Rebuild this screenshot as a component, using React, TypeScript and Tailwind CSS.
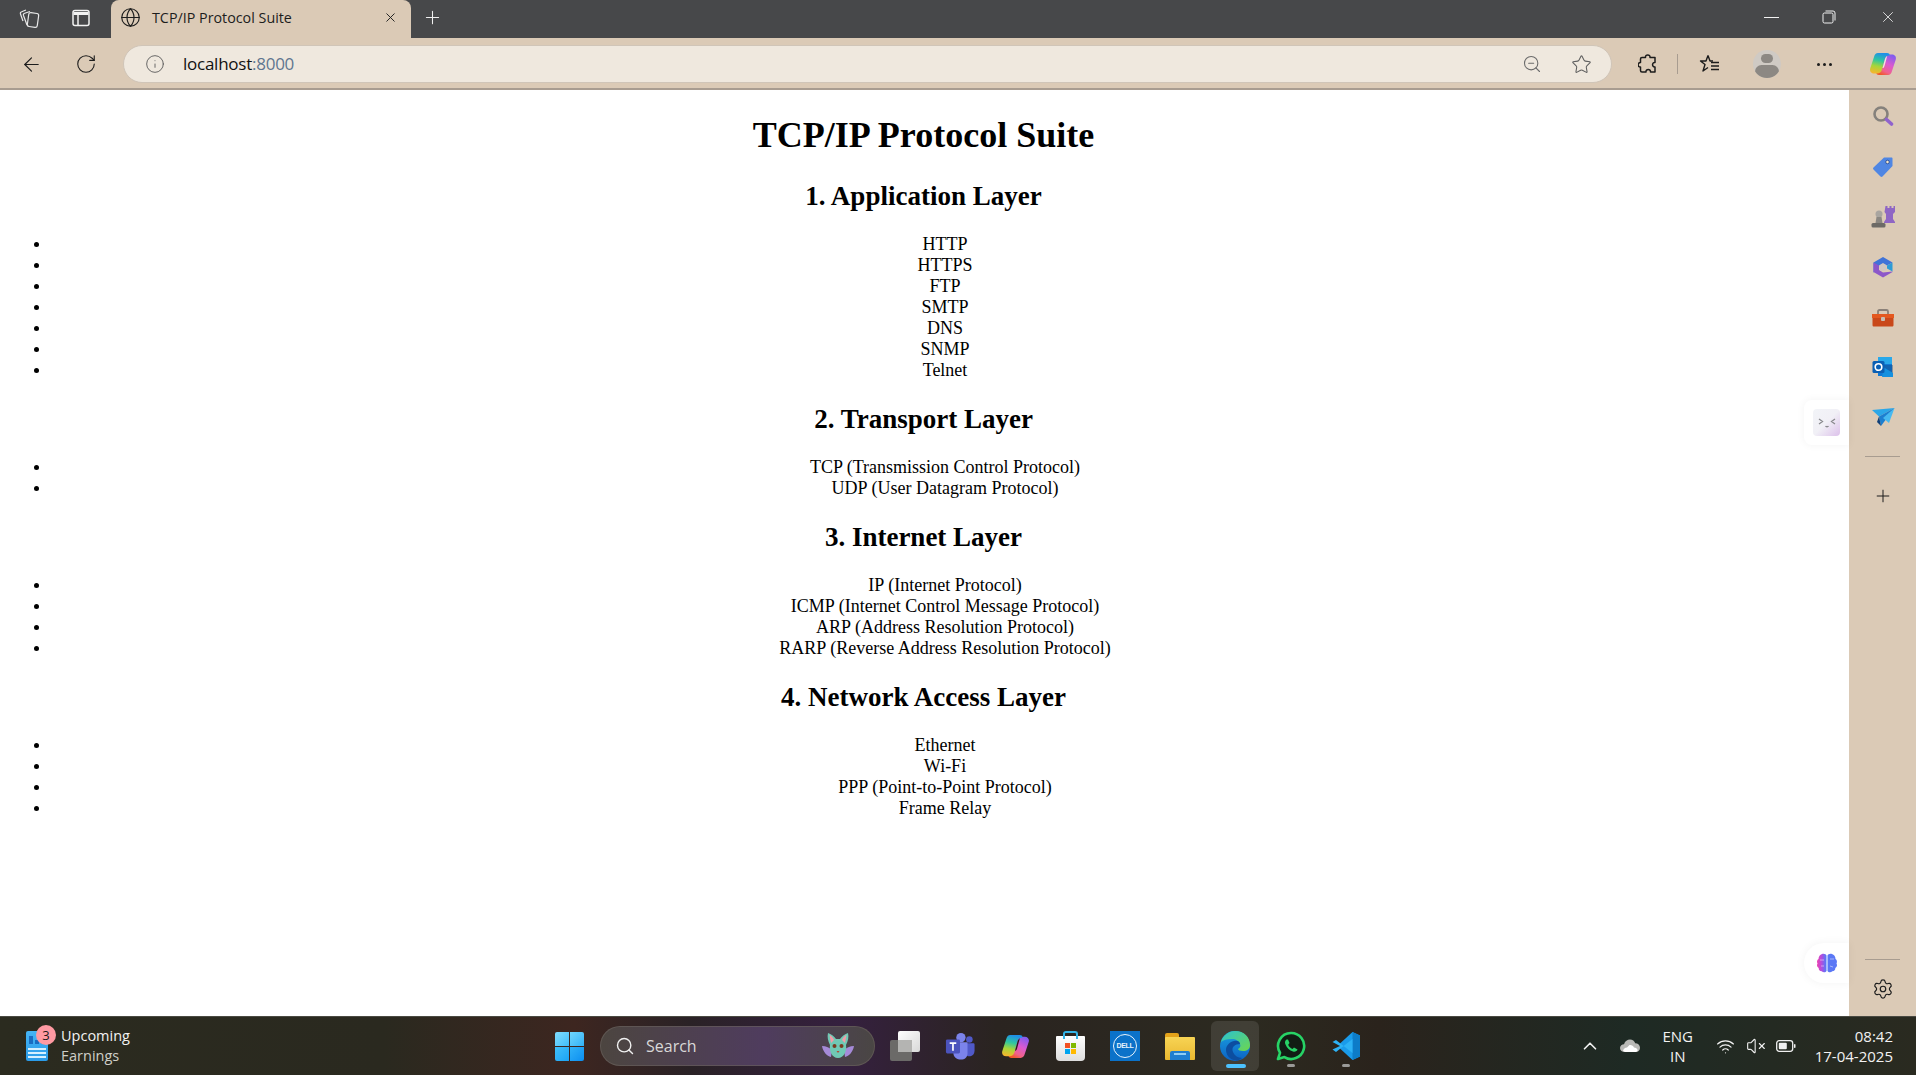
import { ArrowLeft, ChevronUp, Globe, Info, Plus, RotateCw, Search, Settings, Star, VolumeX, Wifi, X, ZoomOut } from "lucide-react"

const layers = [
  { title: "1. Application Layer", items: ["HTTP", "HTTPS", "FTP", "SMTP", "DNS", "SNMP", "Telnet"] },
  { title: "2. Transport Layer", items: ["TCP (Transmission Control Protocol)", "UDP (User Datagram Protocol)"] },
  {
    title: "3. Internet Layer",
    items: [
      "IP (Internet Protocol)",
      "ICMP (Internet Control Message Protocol)",
      "ARP (Address Resolution Protocol)",
      "RARP (Reverse Address Resolution Protocol)",
    ],
  },
  { title: "4. Network Access Layer", items: ["Ethernet", "Wi-Fi", "PPP (Point-to-Point Protocol)", "Frame Relay"] },
]

function Collections() {
  return (
    <svg width="22" height="22" viewBox="0 0 22 22" fill="none" stroke="#e8e8e8" strokeWidth="1.2">
      <rect x="10" y="6" width="10" height="14" rx="2" transform="rotate(8 15 13)" />
      <path d="M9 18 5.500 8.500c-.3-1 .2-2 1.200-2.300L12 4.500" />
      <path d="M5 14 2.500 7c-.3-1 .2-2 1.200-2.300L8 3" />
    </svg>
  )
}

function VerticalTabs() {
  return (
    <svg width="20" height="20" viewBox="0 0 20 20" fill="none" stroke="#f2f2f2" strokeWidth="1.500">
      <rect x="2" y="2.500" width="16" height="15" rx="2" />
      <path d="M2.500 5.500h15" strokeWidth="3" />
      <path d="M7 6v11" />
    </svg>
  )
}

function Restore() {
  return (
    <svg width="14" height="14" viewBox="0 0 14 14" fill="none" stroke="#f2f2f2" strokeWidth="1">
      <rect x="1" y="3" width="10" height="10" rx="1.500" />
      <path d="M3.500 1h7.500a2 2 0 0 1 2 2v7.500" />
    </svg>
  )
}

function Puzzle() {
  return (
    <svg width="20" height="22" viewBox="0 0 20 22" fill="none" stroke="#1c1c1c" strokeWidth="1.500" strokeLinejoin="round">
      <path d="M7.500 4.500c-.5-3.500 5-3.500 4.500 0h5v5c-3-.7-3.500 4.800 0 4.500v5h-4.500c.5-3.300-5-3.300-4.500 0H4c-1 0-1.500-.6-1.500-1.500V14c-3 .5-3.300-4.800 0-4.500V6c0-1 .5-1.500 1.500-1.500Z" />
    </svg>
  )
}

function Favorites() {
  return (
    <svg width="22" height="22" viewBox="0 0 22 22" fill="none" stroke="#1c1c1c" strokeWidth="1.400" strokeLinejoin="round">
      <path d="M9 2.500 11 8h3M9 2.500 7 8H1.500L6 11.500 4 18l5-3.500" />
      <path d="M12 9.500h8M12 13h8M12 16.500h8" />
    </svg>
  )
}

function Profile() {
  return (
    <div className="w-7 h-7 rounded-full bg-[#cfcac4] overflow-hidden flex flex-col items-center">
      <div className="w-3 h-3 mt-1 rounded-full bg-[#8c8883]" />
      <div className="w-6 h-4 mt-[2px] rounded-full bg-[#8c8883]" />
    </div>
  )
}

function Copilot({ size = 28, id, gap }: { size?: number; id: string; gap: string }) {
  return (
    <svg width={size} height={size} viewBox="0 0 28 28">
      <defs>
        <linearGradient id={`${id}a`} x1="0.500" y1="0" x2="0.300" y2="1">
          <stop offset="0" stopColor="#1f8fe8" />
          <stop offset="0.35" stopColor="#2fc6a0" />
          <stop offset="0.65" stopColor="#a6d63a" />
          <stop offset="1" stopColor="#f7b52c" />
        </linearGradient>
        <linearGradient id={`${id}b`} x1="0.800" y1="0" x2="0.300" y2="1">
          <stop offset="0" stopColor="#7c5cf0" />
          <stop offset="0.45" stopColor="#d95ad0" />
          <stop offset="0.8" stopColor="#f0628c" />
          <stop offset="1" stopColor="#f0582c" />
        </linearGradient>
      </defs>
      <path d="M19 25h-9c-2 0-3-1-2.500-2.500h.5c2 0 3.500-1 4-3l3-11c.6-2.500 2.500-4 5-4h3c3 0 4.500 2.500 3.800 5L23 21c-.6 2.500-2 4-4 4Z" fill={`url(#${id}b)`} />
      <path d="M9 3h9c2 0 3 1 2.500 2.500H20c-2 0-3.500 1-4 3l-3 11c-.6 2.500-2.500 4-5 4H5c-3 0-4.500-2.500-3.800-5L5 7c.6-2.500 2-4 4-4Z" fill={`url(#${id}a)`} />
      <path d="M13.500 18 16 9c.4-1.500 1.200-2.500 2.200-3l-2.700 10c-.4 1.400-1 2.200-2 2Z" fill={gap} />
    </svg>
  )
}

function SidebarSearch() {
  return (
    <svg width="22" height="22" viewBox="0 0 22 22" fill="none">
      <circle cx="9" cy="9" r="6.500" stroke="#85817c" strokeWidth="2.600" />
      <path d="m14.500 14.500 5 4.500" stroke="#9063cd" strokeWidth="3.600" strokeLinecap="round" />
    </svg>
  )
}

function Tag() {
  return (
    <svg width="22" height="22" viewBox="0 0 22 22">
      <path d="M12 1.500h7.500c.6 0 1 .4 1 1V10L10.500 20.500c-.6.6-1.400.6-2 0L1.500 13.500c-.6-.6-.6-1.400 0-2Z" fill="#4f86e3" />
      <circle cx="15.500" cy="6" r="1.800" fill="#f4e6c8" stroke="#33559c" />
    </svg>
  )
}

function Chess() {
  return (
    <svg width="24" height="24" viewBox="0 0 24 24">
      <path d="M14.500 1h2v2h2V1h2v2h2V1h1.500v6l-2 2v5l2 3v1H13v-1l2-3V9l-1.500-2Z" fill="#8f66c4" />
      <circle cx="8" cy="9" r="3.500" fill="#a9a5a0" />
      <path d="M5.500 12h5l1 6h-7Z" fill="#8b8782" />
      <rect x="0.500" y="18" width="14" height="4.500" rx="1.500" fill="#6d6a66" />
    </svg>
  )
}

function M365() {
  return (
    <svg width="22" height="22" viewBox="0 0 22 22">
      <path d="M11 1 20.500 6.500 15 9.500 11 7 7 9.500V14L1.500 16.500V6.500Z" fill="#3f73d8" />
      <path d="M1.500 6.500 7 9.500V14l4 2.500 9.500-1V16l-9.500 5.500L1.500 16Z" fill="#8d57c9" />
      <path d="M20.500 6.500V15.500L15 12.500V9.500Z" fill="#2d9bd6" />
      <circle cx="11" cy="11.500" r="3.500" fill="#cfc6c2" />
    </svg>
  )
}

function Toolbox() {
  return (
    <svg width="24" height="22" viewBox="0 0 24 22" className="mt-[3px]">
      <path d="M7 6V3.500C7 2.500 7.500 2 8.500 2h7c1 0 1.500.5 1.500 1.500V6" fill="none" stroke="#8b8078" strokeWidth="1.800" />
      <rect x="1" y="6" width="22" height="4" fill="#e4581f" />
      <path d="M1.500 10h21v7c0 1-.6 1.500-1.500 1.500H3c-1 0-1.500-.5-1.500-1.500Z" fill="#c9481a" />
      <rect x="10" y="9" width="4" height="4" rx="1" fill="#c8bdb2" />
    </svg>
  )
}

function Outlook() {
  return (
    <svg width="22" height="22" viewBox="0 0 22 22">
      <rect x="6" y="1" width="14" height="8" fill="#28a8ea" />
      <rect x="6" y="8" width="14" height="12" fill="#0f78d4" />
      <path d="M12 9h9v11h-9Z" fill="#14447d" opacity="0.4" />
      <path d="M12 11.500 21 17v4H10Z" fill="#1490df" />
      <rect x="0.500" y="5" width="12" height="12" rx="1.500" fill="#0a5fb4" />
      <circle cx="6.500" cy="11" r="3.300" fill="none" stroke="#ffffff" strokeWidth="1.600" />
    </svg>
  )
}

function SendIcon() {
  return (
    <svg width="24" height="20" viewBox="0 0 24 20">
      <path d="M1 3 23.500 1 8 9.500Z" fill="#2ba7e8" />
      <path d="M23.500 1 8 9.500 10 19Z" fill="#1c7fd0" />
      <path d="M8 9.500 6 15l4 4Z" fill="#0f3f78" />
      <path d="M23.500 1 12 11l6 5Z" fill="#46b9f0" />
    </svg>
  )
}

function Face() {
  return (
    <div className="w-[27px] h-[27px] rounded bg-gradient-to-br from-[#f2f4f8] via-[#f1f0f6] to-[#dcc0ea] flex items-center justify-center">
      <svg width="18" height="12" viewBox="0 0 18 12" fill="none" stroke="#8a8a8e" strokeWidth="1.300">
        <path d="m1 2 3.500 2.500L1 7M17 2l-3.500 2.500L17 7M7.500 9c.6 1 2.400 1 3 0" />
      </svg>
    </div>
  )
}

function Brain() {
  return (
    <svg width="22" height="22" viewBox="0 0 22 22">
      <defs>
        <linearGradient id="brain" x1="0" y1="0" x2="1" y2="0">
          <stop offset="0" stopColor="#ef3fb0" />
          <stop offset="0.5" stopColor="#b04fe0" />
          <stop offset="1" stopColor="#4d7dfa" />
        </linearGradient>
      </defs>
      <path d="M6 2c2-.8 4 .2 4.500 1.500V19c-.8 1.500-3.500 1.600-4.800.3-2 0-3.200-1.500-3-3.300C1 15 .5 13 1.500 11.500.6 9.800 1 7.800 2.500 7 2.500 4.500 4 2.500 6 2Z" fill="url(#brain)" />
      <path d="M16 2c-2-.8-4 .2-4.500 1.500V19c.8 1.500 3.500 1.600 4.800.3 2 0 3.200-1.500 3-3.300 1.700-1 2.200-3 1.200-4.500.9-1.700.5-3.700-1-4.500 0-2.500-1.500-4.500-3.500-5Z" fill="#5b78f5" />
      <path d="M4 8h4M5 14h3M14 7h4M14 14l3 1" stroke="#ffffff" strokeOpacity="0.6" strokeWidth="0.800" />
    </svg>
  )
}

function Widget() {
  return (
    <div className="relative w-[22px] h-[30px] rounded-[2px] bg-gradient-to-b from-[#45b4f5] to-[#2a9be8] flex flex-col justify-end items-center gap-[2px] pb-[3px]">
      <div className="flex items-end gap-[2px] mb-[2px]">
        <div className="w-1 h-2 bg-[#1a6cc0]" />
        <div className="w-1 h-1 bg-[#1a6cc0]" />
        <div className="w-1 h-[6px] bg-[#1a6cc0]" />
      </div>
      <div className="w-[18px] h-[2px] bg-[#d5f0ff]" />
      <div className="w-[18px] h-[2px] bg-[#d5f0ff]" />
      <div className="w-[18px] h-[2px] bg-[#d5f0ff]" />
    </div>
  )
}

function WindowsLogo() {
  return (
    <div className="grid grid-cols-2 gap-[1px] w-[29px] h-[29px]">
      <div className="rounded-tl-[2px] bg-gradient-to-br from-[#7fdcfd] to-[#3dbdf9]" />
      <div className="rounded-tr-[2px] bg-gradient-to-br from-[#6fd6fd] to-[#2fb2f8]" />
      <div className="rounded-bl-[2px] bg-gradient-to-br from-[#3fbff9] to-[#1aa3f5]" />
      <div className="rounded-br-[2px] bg-gradient-to-br from-[#2fb2f8] to-[#0a8ef0]" />
    </div>
  )
}

function Bat() {
  return (
    <svg width="34" height="30" viewBox="0 0 34 30">
      <path d="M1 15c4 0 8 2 10 4l-1 7c-4-1-8-5-9-11ZM33 15c-4 0-8 2-10 4l1 7c4-1 8-5 9-11Z" fill="#a58ad8" />
      <path d="M7 2c3 1 6 3 8 6h4c2-3 5-5 8-6 1 4 0 8-2 12 1 6-2 13-8 13S8 20 9 14C7 10 6 6 7 2Z" fill="#70c9b5" />
      <path d="M8.500 4c2 1 3.500 2.500 4.500 5l-3 3ZM25.500 4c-2 1-3.500 2.500-4.500 5l3 3Z" fill="#f29ca8" />
      <circle cx="13.500" cy="15" r="2" fill="#7a3a22" />
      <circle cx="20.500" cy="15" r="2" fill="#7a3a22" />
      <path d="M15.500 20h3L17 22Z" fill="#b04a3a" />
    </svg>
  )
}

function TaskView() {
  return (
    <div className="relative w-[30px] h-[30px]">
      <div className="absolute left-0 bottom-0 w-[22px] h-[21px] rounded-[2px] bg-[#6b6a68]" />
      <div className="absolute right-0 top-0 w-[22px] h-[21px] rounded-[2px] bg-gradient-to-br from-[#ffffff] to-[#d8d8d8]" />
      <div className="absolute left-[8px] top-[9px] w-[14px] h-[12px] bg-[#b4b4b2]" />
    </div>
  )
}

function Teams() {
  return (
    <svg width="32" height="30" viewBox="0 0 32 30">
      <circle cx="17" cy="6" r="5" fill="#7b83eb" />
      <circle cx="26" cy="8" r="3.500" fill="#5059c9" />
      <path d="M20 12h10c1 0 1.500.5 1.500 1.500V20c0 4-3 6-5.500 6-2 0-4-1-5-3Z" fill="#5059c9" />
      <path d="M9 11h15v12c0 4-3 6.500-7 6.500S9 27 9 23Z" fill="#7b83eb" />
      <rect x="1" y="8" width="15" height="15" rx="1.500" fill="#4b53bc" />
      <path d="M5 12h7M8.500 12v8" stroke="#ffffff" strokeWidth="1.800" />
    </svg>
  )
}

function Store() {
  return (
    <div className="relative w-[29px] h-[30px] flex items-end">
      <div className="absolute top-0 left-[7px] w-[15px] h-[8px] rounded-t-[3px] border-2 border-b-0 border-[#35b5e8]" />
      <div className="w-[29px] h-[25px] rounded-b-[4px] rounded-t-[1px] bg-gradient-to-b from-[#ffffff] to-[#dedede] flex items-center justify-center">
        <div className="grid grid-cols-2 gap-[1px]">
          <div className="w-[5px] h-[5px] bg-[#f25022]" />
          <div className="w-[5px] h-[5px] bg-[#7fba00]" />
          <div className="w-[5px] h-[5px] bg-[#00a4ef]" />
          <div className="w-[5px] h-[5px] bg-[#ffb900]" />
        </div>
      </div>
    </div>
  )
}

function Dell() {
  return (
    <div className="w-[30px] h-[30px] bg-[#0b72c9] flex items-center justify-center">
      <div className="w-6 h-6 rounded-full border-[1.500px] border-[#e8f3fb] flex items-center justify-center text-[7px] font-bold text-[#e8f3fb] font-['Liberation_Sans',sans-serif] tracking-[-0.3px]">
        DELL
      </div>
    </div>
  )
}

function Explorer() {
  return (
    <div className="relative w-[30px] h-[27px]">
      <div className="absolute left-0 top-0 w-[14px] h-[8px] rounded-t-[2px] bg-[#e3a21a]" />
      <div className="absolute left-0 top-[4px] w-[30px] h-[23px] rounded-[1px] bg-gradient-to-b from-[#f7d454] to-[#eab82e]" />
      <div className="absolute left-[5px] bottom-0 w-[20px] h-[9px] rounded-t-[2px] bg-[#1f7ed0] flex justify-center pt-[2px]">
        <div className="w-3 h-[2px] bg-[#8fcdf5]" />
      </div>
    </div>
  )
}

function Edge() {
  return (
    <svg width="30" height="30" viewBox="0 0 30 30">
      <defs>
        <linearGradient id="edgeA" x1="0" y1="0" x2="1" y2="1">
          <stop offset="0" stopColor="#2bc3d2" />
          <stop offset="1" stopColor="#6dd64c" />
        </linearGradient>
        <linearGradient id="edgeB" x1="0" y1="0" x2="0" y2="1">
          <stop offset="0" stopColor="#1aa0e0" />
          <stop offset="1" stopColor="#0b62c4" />
        </linearGradient>
      </defs>
      <circle cx="15" cy="15" r="15" fill="url(#edgeB)" />
      <path d="M1 11C3 4 9 0 15 0c9 0 15 6 15 14 0 4-3 6-7 6-3 0-5-1-5-2 2-1 3-3 2-5-1-3-4-5-8-5-5 0-9 1-11 3Z" fill="url(#edgeA)" />
      <path d="M14 10c4-1 6 1 6 3-5 0-9 3-7 8 1 3 5 6 9 6-2 2-5 3-8 2-5-1-8-6-8-10s3-8 8-9Z" fill="#0c4ea0" />
    </svg>
  )
}

function WhatsApp() {
  return (
    <svg width="30" height="30" viewBox="0 0 30 30">
      <path d="M15 2a13 13 0 0 0-11 19.800L2 28l6.400-1.900A13 13 0 1 0 15 2Z" fill="#111d14" stroke="#27d366" strokeWidth="2.600" strokeLinejoin="round" />
      <path d="M10.500 8.500c-1.500 1-2 3-1 5 1.500 3.500 4 6 7.500 7 2 .6 4-.3 4.500-2l-3.500-2-1.500 1.500c-2-.8-3.500-2.300-4.300-4.300L13.500 12l-1.500-3.500Z" fill="#27d366" />
    </svg>
  )
}

function VsCode() {
  return (
    <svg width="30" height="30" viewBox="0 0 30 30">
      <path d="M21.500 1 29 4.500v21L21.500 29 9 17.500V12.500Z" fill="#1a9bea" />
      <path d="M21.500 1v28L29 25.500v-21Z" fill="#0d7cc8" />
      <path d="M21.500 8 5 21 1.500 18.500 9 15 1.500 11 5 9l16.500 13Z" fill="#2db2f5" />
    </svg>
  )
}

function OneDrive() {
  return (
    <svg width="20" height="14" viewBox="0 0 20 14">
      <path d="M5 13c-3 0-5-1.500-5-4s2-3.800 4-3.800C5 2 7.500.5 10 .5c2.500 0 4.500 1.500 5.200 3.800 2.800 0 4.800 2 4.800 4.500s-1.500 4.200-4 4.200Z" fill="#b9b9b6" />
      <path d="M9.500 6c2-.3 4 .8 4.500 2.500 1.500 0 3.500 1 3.800 3L16 13H5l-2-1c.5-2 2-3.500 4-3.500Z" fill="#ffffff" />
    </svg>
  )
}

function Battery() {
  return (
    <svg width="20" height="14" viewBox="0 0 20 14" fill="none">
      <rect x="0.700" y="1.700" width="16" height="10.600" rx="2.500" stroke="#f0f0f0" strokeWidth="1.300" />
      <rect x="2.800" y="3.800" width="8" height="6.400" rx="1" fill="#f0f0f0" />
      <rect x="18" y="5" width="1.500" height="4" rx="0.700" fill="#f0f0f0" />
    </svg>
  )
}

function TabStrip() {
  return (
    <div className="flex h-[38px] bg-[#47484a]">
      <div className="w-[111px] flex items-center pl-[18px] gap-[31px] pb-[3px]">
        <Collections />
        <VerticalTabs />
      </div>
      <div className="w-[300px] bg-[#dbcab6] rounded-t-lg flex items-center pl-[9px] pr-[13px] pb-[3px] text-[#1d1d1d]">
        <Globe size={21} strokeWidth={1.300} />
        <span className="ml-[11px] text-[14.300px] flex-1">TCP/IP Protocol Suite</span>
        <X size={15} strokeWidth={1.500} />
      </div>
      <div className="ml-[11px] flex items-center pb-[3px]">
        <Plus size={21} strokeWidth={1.200} className="text-[#f0f0f0]" />
      </div>
      <div className="ml-auto flex items-center pb-[4px] pr-[19px] gap-[43px] text-[#f2f2f2]">
        <div className="w-[15px] h-px bg-[#f2f2f2]" />
        <Restore />
        <X size={18} strokeWidth={1.100} />
      </div>
    </div>
  )
}

function Toolbar() {
  return (
    <div className="flex items-center h-[52px] pt-[2px] bg-[#dbcab6] border-b-2 border-[#a89c90] text-[#1c1c1c]">
      <div className="w-[123px] flex items-center pl-[20px] gap-[32px]">
        <ArrowLeft size={23} strokeWidth={1.200} />
        <RotateCw size={22} strokeWidth={1.200} />
      </div>
      <div className="w-[1489px] h-[38px] rounded-full bg-[#efe8de] border border-[#d0c5b8] flex items-center pl-[21px] pr-[19px]">
        <Info size={20} strokeWidth={1.100} className="text-[#5c5c5c]" />
        <span className="ml-[18px] text-[17px] tracking-[-0.250px] text-[#111111]">
          localhost<span className="text-[#5f7690]">:8000</span>
        </span>
        <ZoomOut size={20} strokeWidth={1.300} className="ml-auto text-[#6b6b6b]" />
        <Star size={21} strokeWidth={1.200} className="ml-[29px] text-[#5f5f5f]" />
      </div>
      <div className="flex items-center ml-[26px]">
        <Puzzle />
        <div className="ml-[19px] w-px h-5 bg-[#a89c90]" />
        <div className="ml-[21px]">
          <Favorites />
        </div>
        <div className="ml-[32px]">
          <Profile />
        </div>
        <div className="ml-[36px] flex gap-[3px]">
          <div className="w-[3px] h-[3px] rounded-full bg-[#1c1c1c]" />
          <div className="w-[3px] h-[3px] rounded-full bg-[#1c1c1c]" />
          <div className="w-[3px] h-[3px] rounded-full bg-[#1c1c1c]" />
        </div>
        <div className="ml-[37px]">
          <Copilot id="edgeCopilot" gap="#f1e7dc" />
        </div>
      </div>
    </div>
  )
}

function Page() {
  return (
    <main className="relative flex-1 pr-[2px] bg-white text-black text-center font-['Liberation_Serif','Times_New_Roman',serif] text-[18px] leading-[21px]">
      <div className="flow-root">
        <h1 className="mt-[25px] mb-[25px] text-[36px] leading-[41px] font-bold">TCP/IP Protocol Suite</h1>
        {layers.map((layer) => (
          <section key={layer.title}>
            <h2 className="mt-[23px] mb-[22px] text-[27px] leading-[31px] font-bold">{layer.title}</h2>
            <ul className="pl-[43px]">
              {layer.items.map((item) => (
                <li
                  key={item}
                  className="relative before:absolute before:-left-[9px] before:top-[8px] before:w-[5px] before:h-[5px] before:rounded-full before:bg-black"
                >
                  {item}
                </li>
              ))}
            </ul>
          </section>
        ))}
      </div>

      {/* edge floating helpers */}
      <div className="absolute right-0 top-[310px] w-[45px] h-[45px] rounded-l-lg bg-white shadow-[0_0_8px_rgba(0,0,0,0.05)] flex items-center pl-[9px]">
        <Face />
      </div>
      <div className="absolute right-0 top-[853px] w-[45px] h-[40px] rounded-l-full bg-white shadow-[0_0_10px_rgba(0,0,0,0.05)] flex items-center pl-[12px]">
        <Brain />
      </div>
    </main>
  )
}

function Sidebar() {
  return (
    <aside className="w-[67px] bg-[#dbcab6] flex flex-col items-center text-[#1c1c1c]">
      <div className="flex flex-col items-center gap-[26px] pt-[13px]">
        <div className="h-[26px] flex items-center"><SidebarSearch /></div>
        <div className="h-6 flex items-center"><Tag /></div>
        <div className="h-6 flex items-center"><Chess /></div>
        <div className="h-6 flex items-center"><M365 /></div>
        <div className="h-6 flex items-center"><Toolbox /></div>
        <div className="h-6 flex items-center"><Outlook /></div>
        <div className="h-6 flex items-center"><SendIcon /></div>
      </div>
      <div className="mt-[27px] w-[35px] h-px bg-[#a89c90]" />
      <Plus size={20} strokeWidth={1.200} className="mt-[29px]" />
      <div className="mt-auto w-[35px] h-px bg-[#a89c90]" />
      <Settings size={22} strokeWidth={1.300} className="mt-[18px] mb-[16px]" />
    </aside>
  )
}

function Taskbar() {
  return (
    <footer className="h-[59px] flex items-center border-t border-[#4a4a42] bg-[linear-gradient(90deg,#2b2b1f_0%,#2a291f_20%,#3d2620_30%,#2a2226_36%,#35203f_44%,#2a2420_52%,#2c2a20_65%,#2a231c_72%,#1e2a24_85%,#2a2a20_100%)] font-['Open_Sans','Noto_Sans',sans-serif] text-[#f2f2f2]">
      <div className="w-[555px] flex items-center pl-[26px]">
        <div className="relative">
          <Widget />
          <div className="absolute -top-[6px] left-[10px] w-5 h-5 rounded-full bg-[#ff9aa2] text-[#1c1c1c] text-[13px] leading-5 text-center">3</div>
        </div>
        <div className="ml-[13px] text-[14.500px] leading-[20px] -mt-[1px]">
          <div>Upcoming</div>
          <div className="text-[#cfcfc8]">Earnings</div>
        </div>
      </div>

      <WindowsLogo />

      <div className="ml-[16px] w-[275px] h-10 rounded-full border border-[#6a625e]/60 bg-[linear-gradient(90deg,#4c4540,#4f3c5e_60%,#4a4644)] flex items-center pl-[14px] pr-[21px]">
        <Search size={20} strokeWidth={1.700} className="text-[#f0f0f0]" />
        <span className="ml-[11px] text-[16px] text-[#d8d8d8]">Search</span>
        <div className="ml-auto translate-x-[2px]"><Bat /></div>
      </div>

      <div className="flex items-center ml-[15px]">
        <div className="w-[30px] flex justify-center"><TaskView /></div>
        <div className="ml-[25px] w-[30px] flex justify-center"><Teams /></div>
        <div className="ml-[25px] w-[30px] flex justify-center"><Copilot id="taskCopilot" size={29} gap="#2a1c1c" /></div>
        <div className="ml-[25px] w-[30px] flex justify-center"><Store /></div>
        <div className="ml-[25px] w-[30px] flex justify-center"><Dell /></div>
        <div className="ml-[25px] w-[30px] flex justify-center"><Explorer /></div>
        <div className="relative ml-[25px] w-[30px] flex justify-center">
          <div className="absolute -left-[9px] -top-[10px] w-[48px] h-[50px] rounded-md bg-white/10" />
          <div className="relative"><Edge /></div>
          <div className="absolute left-[6px] top-[33px] w-5 h-[4px] rounded-full bg-[#4cc2ff]" />
        </div>
        <div className="relative ml-[26px] w-[30px] flex justify-center">
          <WhatsApp />
          <div className="absolute left-[11px] top-[33px] w-2 h-[3px] rounded-full bg-[#9a9a98]" />
        </div>
        <div className="relative ml-[25px] w-[30px] flex justify-center">
          <VsCode />
          <div className="absolute left-[11px] top-[33px] w-2 h-[3px] rounded-full bg-[#9a9a98]" />
        </div>
      </div>

      <div className="flex items-center ml-auto pr-[23px]">
        <ChevronUp size={22} strokeWidth={1.800} />
        <div className="ml-[19px]"><OneDrive /></div>
        <div className="ml-[21px] w-[34px] text-[15px] leading-[20px] text-center">
          <div>ENG</div>
          <div>IN</div>
        </div>
        <Wifi size={19} strokeWidth={1.500} className="ml-[21px]" />
        <VolumeX size={20} strokeWidth={1.300} className="ml-[11px]" />
        <div className="ml-[10px]"><Battery /></div>
        <div className="ml-[19px] text-[15px] leading-[20px] text-right">
          <div>08:42</div>
          <div>17-04-2025</div>
        </div>
      </div>
    </footer>
  )
}

export default function App() {
  return (
    <div className="w-[1916px] h-[1075px] overflow-hidden flex flex-col font-['Open_Sans','Noto_Sans',sans-serif]">
      <TabStrip />
      <Toolbar />
      <div className="flex flex-1 min-h-0">
        <Page />
        <Sidebar />
      </div>
      <Taskbar />
    </div>
  )
}
